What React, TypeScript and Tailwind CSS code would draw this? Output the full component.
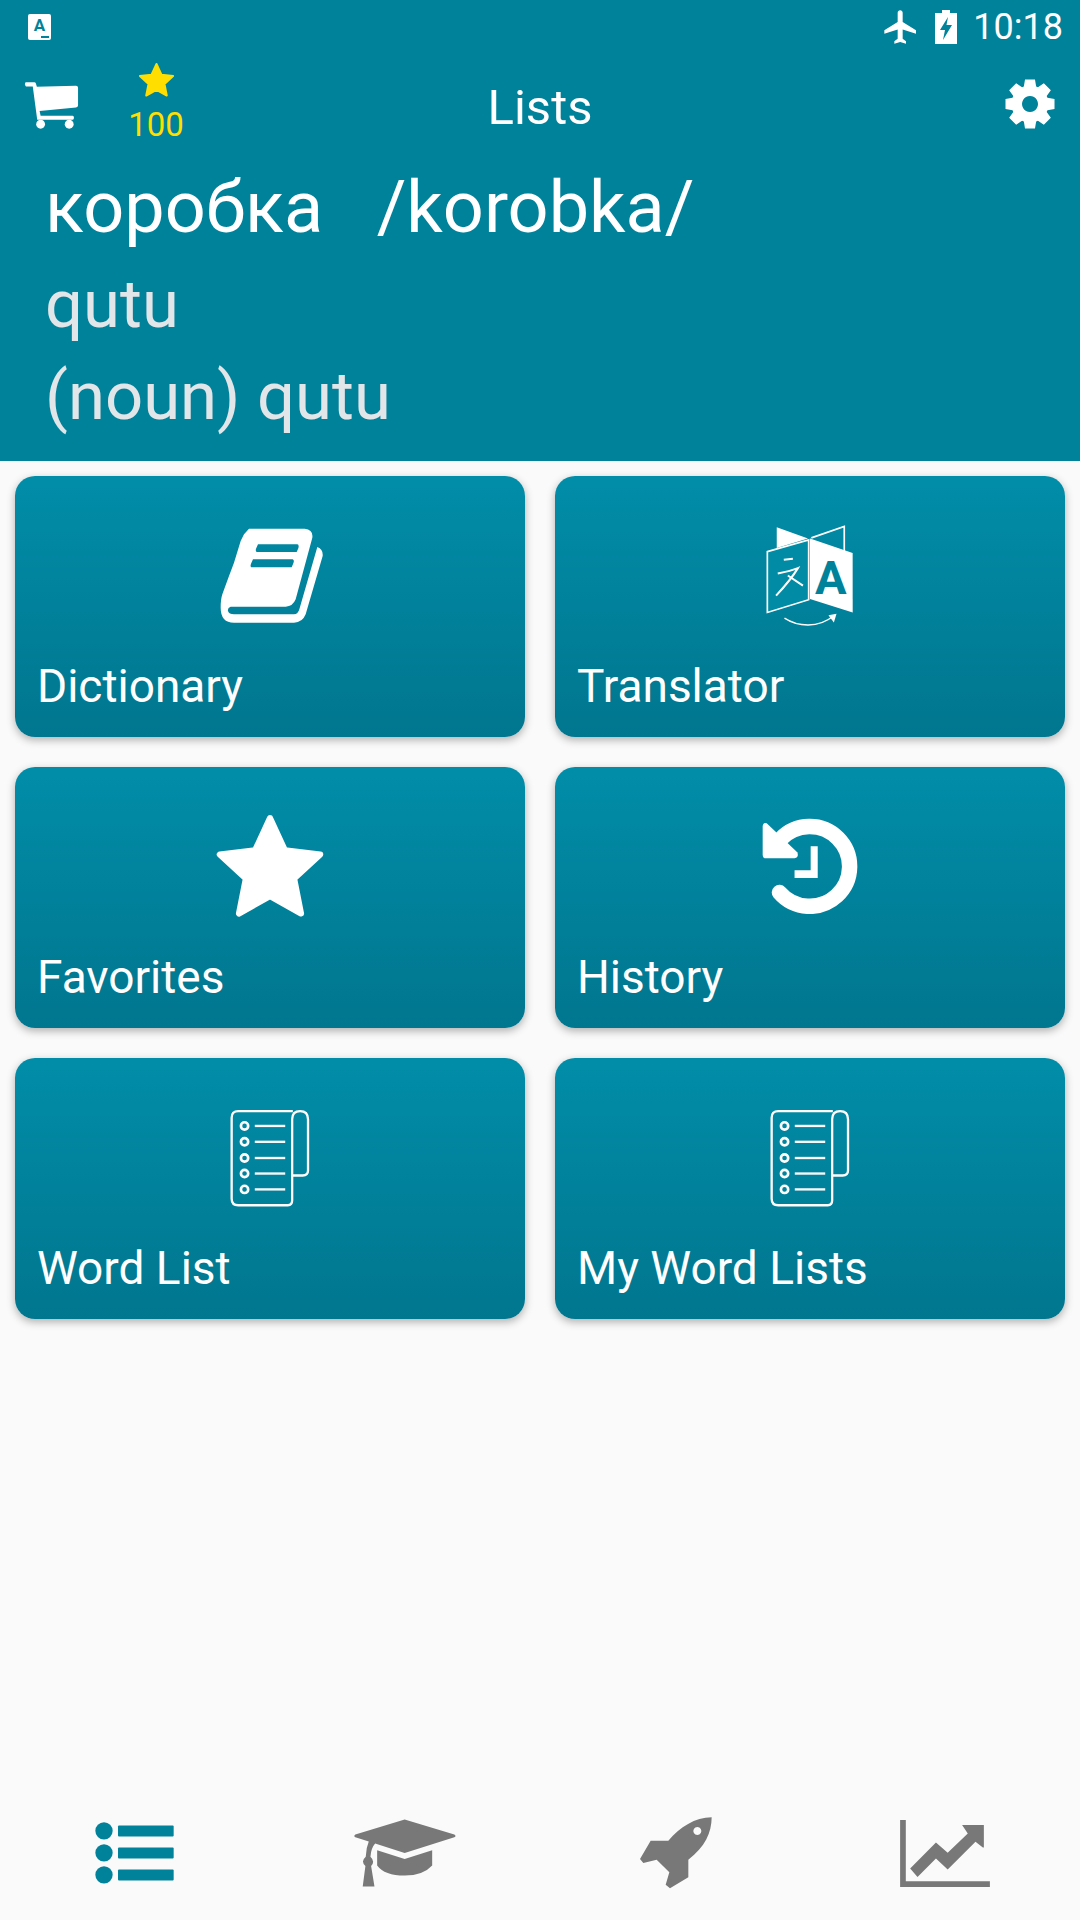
import React from "react";

const Cart = () => (
  <svg width="57" height="49" viewBox="68 246 164 144" fill="white">
    <path d="M74 250H100Q104 250 105 256L107 263 222 260Q228 260 228 266V318Q228 323 222 324L115 334 118 348H212Q216 348 216 354 216 360 212 360H108L95 262H75Q69 256 74 250Z" />
    <circle cx="118" cy="373" r="13" />
    <circle cx="202" cy="373" r="13" />
  </svg>
);

const Gear = () => {
  const pts: string[] = [];
  for (let i = 0; i < 8; i++) {
    const a = (i * Math.PI) / 4 - Math.PI / 2;
    const p = (r: number, d: number) => {
      const t = a + d;
      return `${(25 + r * Math.cos(t)).toFixed(2)} ${(25 + r * Math.sin(t)).toFixed(2)}`;
    };
    pts.push(p(18.5, -0.34), p(25, -0.2), p(25, 0.2), p(18.5, 0.34));
  }
  return (
    <svg width="50" height="50" viewBox="0 0 50 50" fill="white">
      <path fillRule="evenodd" d={`M${pts.join("L")}Z M25 17a8 8 0 1 0 .01 0Z`} />
    </svg>
  );
};

const Star = ({ size, color }: { size: number; color: string }) => (
  <svg width={size} height={size * 0.96} viewBox="0 0 110 106" fill={color} stroke={color} strokeWidth="6" strokeLinejoin="round">
    <polygon points="55,6 69.7,37.8 104.5,41.9 78.8,65.7 85.6,100.1 55,83 24.4,100.1 31.2,65.7 5.5,41.9 40.3,37.8" />
  </svg>
);

const Book = () => (
  <svg width="104" height="96" viewBox="118 86 312 288" fill="white" className="ml-[3px]">
    <path
      fillRule="evenodd"
      d="M205 88H372Q398 90 395 115L345 300Q336 322 315 322H150Q140 325 142 335 145 345 160 345H340Q352 345 356 330L410 143Q428 150 426 170L375 345Q365 370 340 370H160Q120 370 120 325 120 300 125 285L145 230 160 190 180 125 190 105Z M232 135H350Q356 136 353 147L348 158H228Q224 156 226 148Z M217 180H336Q342 182 338 192L333 204H212Q208 202 211 193Z"
    />
  </svg>
);

const Translate = () => (
  <svg width="88" height="101" viewBox="110 72 262 300" fill="none" className="-mt-[2px]">
    <path d="M142 78L235 112 142 140Z" fill="white" />
    <path d="M245 110L343 76V150" stroke="white" strokeWidth="5" />
    <path d="M114 151L237 116V294L114 332Z" stroke="white" strokeWidth="5" fill="#018ba4" />
    <path d="M241 112L368 155V332L241 292Z" fill="white" />
    <text x="303" y="278" textAnchor="middle" fill="#01829b" fontFamily="Roboto, sans-serif" fontWeight="700" fontSize="140">A</text>
    <path d="M163 175L190 172M145 216C165 212 190 206 205 200 190 225 165 255 140 282M175 222L220 252" stroke="white" strokeWidth="6" />
    <path d="M165 349C205 375 265 380 312 342" stroke="white" strokeWidth="4" />
    <path d="M320 336L296 340 312 362Z" fill="white" />
  </svg>
);

const ListDoc = () => (
  <svg width="80" height="100" viewBox="60 54 242 296" fill="none" stroke="white" strokeWidth="7" className="-mt-[1px]">
    <path d="M250 60H85Q65 60 65 80V325Q65 345 85 345H235Q248 345 248 330V85Q248 60 272 60 296 60 296 85V240Q296 255 280 255H250" />
    {[105, 153, 202, 249, 297].map((y) => (
      <g key={y}>
        <circle cx="104" cy={y} r="11" strokeWidth="8" />
        <path d="M135 0H227" transform={`translate(0 ${y})`} strokeWidth="7" />
      </g>
    ))}
  </svg>
);

const History = () => (
  <svg width="96" height="96" viewBox="98 56 286 286" fill="white" className="-mt-[2px]">
    <path d="M150 278A119 119 0 1 0 153 119" fill="none" stroke="white" strokeWidth="46" strokeLinecap="round" />
    <path d="M112 72L203 158Q210 172 195 176H110Q100 176 100 166V80Q102 68 112 72Z" />
    <path d="M243 140H264V235H195V212H243Z" />
  </svg>
);

const ListIcon = () => (
  <svg width="79" height="62" viewBox="106 92 237 185" fill="#01829b" className="-ml-[1px]">
    <circle cx="133" cy="118" r="26" />
    <circle cx="133" cy="184" r="26" />
    <circle cx="133" cy="250" r="26" />
    <rect x="175" y="102" width="167" height="33" rx="3" />
    <rect x="175" y="168" width="167" height="33" rx="3" />
    <rect x="175" y="234" width="167" height="33" rx="3" />
  </svg>
);

const Cap = () => (
  <svg width="102" height="68" viewBox="884 84 304 202" fill="#787878">
    <path d="M1035 85L1183 130Q1190 134 1183 138L1035 185 947 157Q935 170 933 196 948 210 935 224L945 285H910L918 224Q903 210 919 196 920 170 928 151L888 138Q882 134 888 130Z" />
    <path d="M953 177L1035 203 1117 177V222Q1090 252 1035 252 975 252 953 222Z" />
  </svg>
);

const Rocket = () => (
  <svg width="72" height="72" viewBox="60 84 216 216" fill="#787878" className="ml-[1px]">
    <path
      fillRule="evenodd"
      d="M275 85C225 85 180 115 145 155H92L60 210 70 222 110 212 148 250 137 287 150 298 205 265V212C255 175 275 130 275 85ZM232 114a12 12 0 1 0 .01 0Z"
    />
  </svg>
);

const Chart = () => (
  <svg width="90" height="67" viewBox="843 85 268 200" fill="#787878">
    <path d="M843 85H860V268H1111V285H843Z" />
    <path d="M873 230L895 255 950 200 985 233 1068 150 1090 167H1093V100H1028L1045 125 985 183 950 152Z" />
  </svg>
);

const Tile = ({ label, children }: { label: string; children: React.ReactNode }) => (
  <div className="flex h-[261px] w-[510px] flex-col rounded-[20px] bg-gradient-to-b from-[#018da8] to-[#01768f] px-[23px] shadow-[0_3px_8px_rgba(0,0,0,0.3)]">
    <div className="mt-[46px] flex h-[108px] items-center justify-center">{children}</div>
    <div className="mt-[26px] -ml-[1px] text-[46px] leading-[60px] text-white">{label}</div>
  </div>
);

export default function App() {
  return (
    <div className="flex h-[1920px] w-[1080px] flex-col bg-[#fafafa] font-['Roboto',sans-serif]">
      <header className="h-[461px] bg-[#01829b]">
        <div className="flex h-[54px] items-center pl-[28px] pr-[17px]">
          <div className="relative h-[26px] w-[23px] rounded-[2px] bg-white">
            <span className="absolute inset-x-0 top-[3px] text-center text-[17px] font-bold leading-[17px] text-[#01829b]">A</span>
            <span className="absolute bottom-[2px] right-[2px] h-[2px] w-[8px] bg-[#01829b]"></span>
          </div>
          <div className="ml-auto flex items-center">
            <svg width="40" height="40" viewBox="0 0 24 24" fill="white">
              <path d="M21 16v-2l-8-5V3.5c0-.83-.67-1.5-1.5-1.5S10 2.67 10 3.5V9l-8 5v2l8-2.5V19l-2 1.5V22l3.5-1 3.5 1v-1.5L13 19v-5.5l8 2.5z" />
            </svg>
            <svg className="ml-[14px]" width="22" height="34" viewBox="0 0 22 34" fill="white">
              <path fillRule="evenodd" d="M7 0H15V3H22V34H0V3H7ZM13 7L5 20H10L8 30 17 15H11.5Z" />
            </svg>
            <span className="ml-[16px] text-[36px] leading-[40px] text-white">10:18</span>
          </div>
        </div>
        <div className="grid h-[96px] grid-cols-[1fr_auto_1fr]">
          <div className="flex items-start">
            <div className="ml-[23px] mt-[27px]"><Cart /></div>
            <div className="ml-[46px] mt-[8px] flex w-[60px] flex-col items-center">
              <Star size={37} color="#ffde00" />
              <span className="mt-[7px] text-[33px] leading-[40px] text-[#ffde00]">100</span>
            </div>
          </div>
          <div className="pt-[24px] text-[49px] leading-[60px] text-white">Lists</div>
          <div className="flex justify-end pr-[25px] pt-[25px]"><Gear /></div>
        </div>
        <div className="pl-[45px]">
          <div className="mt-[16px] whitespace-pre text-[72px] leading-[84px] text-white">{"коробка   /korobka/"}</div>
          <div className="mt-[8px] text-[67px] leading-[92px] text-[#e3e6e8]">qutu</div>
          <div className="text-[67px] leading-[92px] text-[#e3e6e8]">(noun) qutu</div>
        </div>
      </header>

      <main className="grid grid-cols-[510px_510px] gap-x-[30px] gap-y-[30px] px-[15px] pt-[15px]">
        <Tile label="Dictionary"><Book /></Tile>
        <Tile label="Translator"><Translate /></Tile>
        <Tile label="Favorites"><div className="-mt-[2px]"><Star size={112} color="white" /></div></Tile>
        <Tile label="History"><History /></Tile>
        <Tile label="Word List"><ListDoc /></Tile>
        <Tile label="My Word Lists"><ListDoc /></Tile>
      </main>

      <nav className="mt-auto grid h-[150px] grid-cols-4 items-start pt-[47px]">
        <div className="flex h-[72px] items-center justify-center"><ListIcon /></div>
        <div className="flex h-[72px] items-center justify-center"><Cap /></div>
        <div className="flex h-[72px] items-center justify-center"><Rocket /></div>
        <div className="flex h-[72px] items-center justify-center"><Chart /></div>
      </nav>
    </div>
  );
}
